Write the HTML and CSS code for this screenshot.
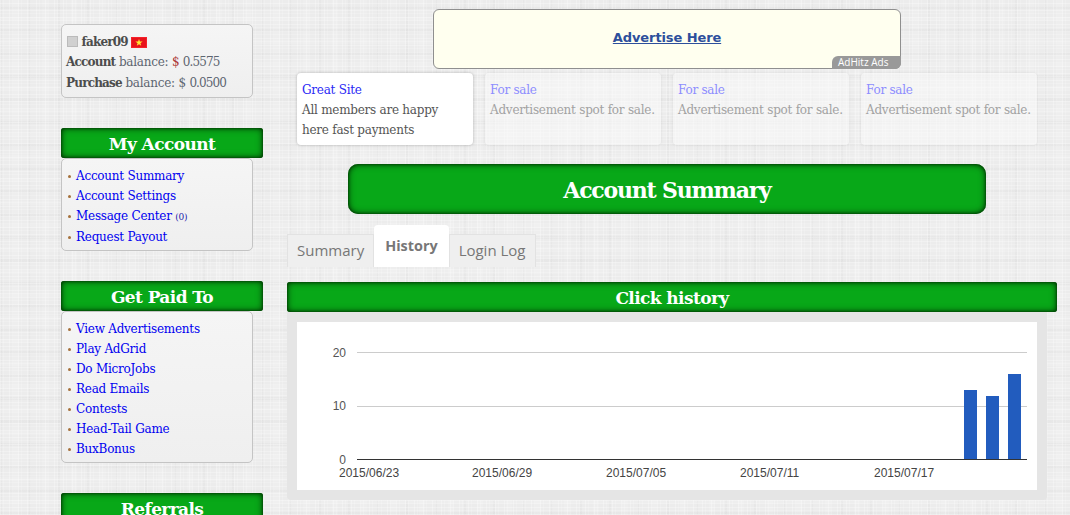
FILE: index.html
```html
<!DOCTYPE html>
<html>
<head>
    <meta charset="UTF-8">
    <title>Account Summary</title>
    <link rel="stylesheet" href="styles.css">
</head>
<body>
    <div class="page">
        <div class="sidebar">
            <div class="box user-box">
                <div class="user-line">
                    <span class="avatar"></span>
                    <b>faker09</b>
                    <svg class="flag" width="16" height="11" viewBox="0 0 16 11">
                        <rect x="0.5" y="0.5" width="15" height="10" fill="#e8131b" stroke="#f5212a"/>
                        <polygon points="8,2 8.9,4.6 11.6,4.6 9.4,6.2 10.2,8.8 8,7.2 5.8,8.8 6.6,6.2 4.4,4.6 7.1,4.6" fill="#ffe933"/>
                    </svg>
                </div>
                <div class="user-line"><b>Account</b> balance: <span class="red">$</span> <span class="num">0.5575</span></div>
                <div class="user-line"><b>Purchase</b> balance: $ <span class="num">0.0500</span></div>
            </div>

            <div class="bar side-bar">My Account</div>
            <div class="box menu-box">
                <ul>
                    <li><a href="#">Account Summary</a></li>
                    <li><a href="#">Account Settings</a></li>
                    <li class="tall"><a href="#">Message Center</a> <small>(0)</small></li>
                    <li><a href="#">Request Payout</a></li>
                </ul>
            </div>

            <div class="bar side-bar">Get Paid To</div>
            <div class="box menu-box">
                <ul>
                    <li><a href="#">View Advertisements</a></li>
                    <li><a href="#">Play AdGrid</a></li>
                    <li><a href="#">Do MicroJobs</a></li>
                    <li><a href="#">Read Emails</a></li>
                    <li><a href="#">Contests</a></li>
                    <li><a href="#">Head-Tail Game</a></li>
                    <li><a href="#">BuxBonus</a></li>
                </ul>
            </div>

            <div class="bar side-bar">Referrals</div>
        </div>

        <div class="main">
            <div class="banner">
                <a href="#">Advertise Here</a>
                <span class="banner-tag">AdHitz Ads</span>
            </div>

            <div class="ads">
                <div class="ad ad-on">
                    <a href="#">Great Site</a>
                    <p>All members are happy<br>here fast payments</p>
                </div>
                <div class="ad">
                    <a href="#">For sale</a>
                    <p>Advertisement spot for sale.</p>
                </div>
                <div class="ad">
                    <a href="#">For sale</a>
                    <p>Advertisement spot for sale.</p>
                </div>
                <div class="ad">
                    <a href="#">For sale</a>
                    <p>Advertisement spot for sale.</p>
                </div>
            </div>

            <h1 class="bar page-title">Account Summary</h1>

            <div class="tabs">
                <a class="tab" href="#">Summary</a>
                <a class="tab tab-on" href="#">History</a>
                <a class="tab" href="#">Login Log</a>
            </div>

            <div class="bar section-bar">Click history</div>
            <div class="chart-wrap">
                <svg class="chart" width="740" height="168" viewBox="0 0 740 168">
                    <line x1="60" y1="30.5" x2="730" y2="30.5" stroke="#ccc"/>
                    <line x1="60" y1="84.5" x2="730" y2="84.5" stroke="#ccc"/>
                    <rect x="667" y="68" width="13" height="69" fill="#225cbe"/>
                    <rect x="689" y="74" width="13" height="63" fill="#225cbe"/>
                    <rect x="711" y="52" width="13" height="85" fill="#225cbe"/>
                    <line x1="60" y1="137.5" x2="730" y2="137.5" stroke="#333"/>
                    <g class="chart-y">
                        <text x="49" y="35">20</text>
                        <text x="49" y="88">10</text>
                        <text x="49" y="142">0</text>
                    </g>
                    <g class="chart-x">
                        <text x="42" y="155">2015/06/23</text>
                        <text x="175" y="155">2015/06/29</text>
                        <text x="309" y="155">2015/07/05</text>
                        <text x="443" y="155">2015/07/11</text>
                        <text x="577" y="155">2015/07/17</text>
                    </g>
                </svg>
            </div>
        </div>
    </div>
</body>
</html>
```

FILE: styles.css
```css
html {
    overflow: hidden;
}
body {
    margin: 0;
    height: 515px;
    overflow: hidden;
    font-family: "DejaVu Serif", serif;
    font-size: 12px;
    letter-spacing: -0.25px;
    color: #555;
    background-color: #ececec;
    background-image:
        repeating-linear-gradient(0deg, rgba(255,255,255,0.28) 0 1px, transparent 1px 4px, rgba(255,255,255,0.18) 4px 5px, transparent 5px 7px),
        repeating-linear-gradient(90deg, rgba(255,255,255,0.28) 0 1px, transparent 1px 3px, rgba(255,255,255,0.18) 3px 4px, transparent 4px 9px),
        repeating-linear-gradient(0deg, rgba(0,0,0,0.018) 0 3px, transparent 3px 11px, rgba(255,255,255,0.12) 11px 15px, transparent 15px 23px),
        repeating-linear-gradient(90deg, rgba(0,0,0,0.018) 0 2px, transparent 2px 13px, rgba(255,255,255,0.12) 13px 19px, transparent 19px 29px);
}
a {
    text-decoration: none;
}
.page {
    display: flex;
    padding-left: 61px;
}
.sidebar {
    width: 226px;
    flex: none;
    padding-top: 24px;
}
.main {
    width: 770px;
    flex: none;
    padding-top: 9px;
}

/* boxes */
.box {
    width: 190px;
    border: 1px solid #c4c4c4;
    border-radius: 5px;
    background: linear-gradient(#f5f5f5, #efefef);
}
.user-box {
    height: 65px;
    padding-top: 7px;
    margin-bottom: 30px;
}
.user-line {
    height: 20.3px;
    line-height: 20.3px;
    padding-left: 4px;
    white-space: nowrap;
    color: #5d6570;
}
.user-line b {
    color: #4d4d4d;
    letter-spacing: -0.8px;
}
.user-line .red {
    color: #a33;
}
.user-line .num {
    letter-spacing: -0.9px;
}
.avatar {
    display: inline-block;
    width: 9px;
    height: 9px;
    margin-left: 1px;
    background: #d0d0d0;
    border: 1px solid #bbb;
    vertical-align: -1px;
}
.flag {
    vertical-align: -2px;
}
.menu-box {
    margin-bottom: 30px;
}
.menu-box ul {
    list-style: none;
    margin: 0;
    padding: 7px 0 3px 6px;
}
.menu-box li {
    height: 20px;
    line-height: 20px;
    white-space: nowrap;
    color: #22a;
}
.menu-box li.tall {
    height: 21px;
}
.menu-box li:before {
    content: "";
    display: inline-block;
    width: 3px;
    height: 3px;
    border-radius: 50%;
    background: #a5713c;
    margin-right: 5px;
    vertical-align: 2px;
}
.menu-box a {
    color: #0000f0;
}
.menu-box small {
    font-size: 9px;
}

/* green bars */
.bar {
    color: #fff;
    font-weight: bold;
    text-align: center;
    background: #08a818;
    box-shadow: inset 0 0 7px #003000, inset 0 0 3px #003000;
    border-radius: 3px;
}
.side-bar {
    width: 202px;
    height: 30px;
    line-height: 33px;
    font-size: 17px;
    letter-spacing: -0.6px;
}
.section-bar {
    height: 30px;
    line-height: 33px;
    font-size: 17px;
    letter-spacing: -0.6px;
}
.page-title {
    width: 638px;
    height: 50px;
    line-height: 52px;
    margin: 19px 0 11px 61px;
    font-size: 22px;
    letter-spacing: -1.2px;
    border-radius: 10px;
}

/* ad banner */
.banner {
    position: relative;
    width: 466px;
    height: 58px;
    margin-left: 146px;
    border: 1px solid #8f8f8f;
    border-radius: 6px;
    background: #ffffef;
    text-align: center;
    line-height: 55px;
    font-family: "DejaVu Sans", sans-serif;
    font-size: 13px;
    letter-spacing: -0.1px;
    font-weight: bold;
}
.banner a {
    color: #2d4f9c;
    text-decoration: underline;
}
.banner-tag {
    position: absolute;
    right: -1px;
    bottom: -1px;
    width: 63px;
    height: 13px;
    padding-left: 6px;
    text-align: left;
    border-radius: 6px 0 6px 0;
    background: #999;
    color: #fff;
    font-family: "Open Sans", sans-serif;
    font-size: 10px;
    letter-spacing: 0;
    font-weight: normal;
    line-height: 13px;
}

/* text ads */
.ads {
    display: flex;
    gap: 12px;
    margin: 4px 0 0 10px;
}
.ad {
    width: 166px;
    height: 60px;
    padding: 7px 5px 5px;
    border-radius: 4px;
    background: rgba(250,250,250,0.55);
    box-shadow: 0 0 3px rgba(0,0,0,0.08);
    line-height: 20px;
    color: #a2a2a2;
}
.ad a {
    color: #8d8dff;
}
.ad p {
    margin: 0;
}
.ad-on {
    background: #fff;
    color: #555;
    box-shadow: 0 0 3px rgba(0,0,0,0.25);
}
.ad-on a {
    color: #2a2af5;
}

/* tabs */
.tabs {
    display: flex;
    align-items: flex-end;
    height: 42px;
    margin-bottom: 15px;
}
.tab {
    height: 32px;
    line-height: 31px;
    padding: 0 9px;
    border: 1px solid #e2e2e2;
    border-bottom: 0;
    background: #efefef;
    color: #777;
    font-family: "Open Sans", sans-serif;
    font-size: 15px;
    letter-spacing: 0;
}
.tab-on {
    height: 42px;
    line-height: 41px;
    padding: 0 11px;
    border: 0;
    border-radius: 4px 4px 0 0;
    background: #fff;
    font-size: 14.4px;
    font-weight: bold;
}

/* chart */
.chart-wrap {
    width: 740px;
    padding: 10px;
    background: #e5e5e5;
    border-radius: 0 0 4px 4px;
}
.chart {
    display: block;
    background: #fff;
    font-family: "Liberation Sans", sans-serif;
    font-size: 12px;
    letter-spacing: 0;
}
.chart-y text {
    text-anchor: end;
    fill: #555;
}
.chart-x text {
    fill: #444;
}
```
